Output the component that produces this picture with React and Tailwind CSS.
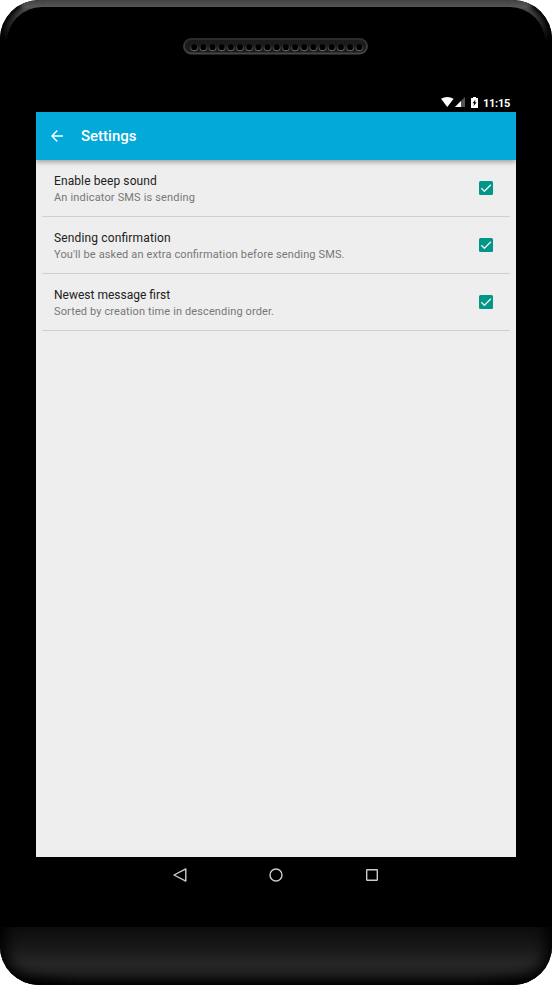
const settings = [
  { title: 'Enable beep sound', detail: 'An indicator SMS is sending', t: 'tracking-[0.1px]', d: 'tracking-[0.16px]' },
  { title: 'Sending confirmation', detail: "You'll be asked an extra confirmation before sending SMS.", t: 'tracking-[0.15px]', d: 'tracking-[0.13px]' },
  { title: 'Newest message first', detail: 'Sorted by creation time in descending order.', t: 'tracking-[0px]', d: 'tracking-[0.12px]' },
];

function Bezel() {
  return (
    <svg className="absolute inset-0" width="552" height="985" viewBox="0 0 552 985">
      <defs>
        <linearGradient id="rim" gradientUnits="userSpaceOnUse" x1="0" y1="0" x2="0" y2="42">
          <stop offset="0" stopColor="#424242" />
          <stop offset="0.16" stopColor="#555555" />
          <stop offset="0.45" stopColor="#303030" />
          <stop offset="1" stopColor="#000000" />
        </linearGradient>
        <linearGradient id="chin" x1="0" y1="0" x2="0" y2="1">
          <stop offset="0" stopColor="#0c0c0c" />
          <stop offset="0.35" stopColor="#181818" />
          <stop offset="0.63" stopColor="#262626" />
          <stop offset="0.78" stopColor="#202020" />
          <stop offset="1" stopColor="#030303" />
        </linearGradient>
        <filter id="soft" filterUnits="userSpaceOnUse" x="-60" y="860" width="672" height="200">
          <feGaussianBlur stdDeviation="7" />
        </filter>
        <filter id="edge" filterUnits="userSpaceOnUse" x="-20" y="-20" width="592" height="90">
          <feGaussianBlur stdDeviation="2.5" />
        </filter>
        <clipPath id="base"><rect x="0" y="927" width="552" height="58" /></clipPath>
        <clipPath id="case"><rect width="552" height="985" rx="39" /></clipPath>
      </defs>
      <g clipPath="url(#case)">
        <path fill="url(#rim)" d="M0 42V39A39 39 0 0 1 39 0H513A39 39 0 0 1 552 39V42H545A35 35 0 0 0 510 7H42A35 35 0 0 0 7 42Z" />
        <path d="M-1 52V39A40 40 0 0 1 20 4M553 52V39A40 40 0 0 0 532 4" fill="none" stroke="#000" strokeWidth="9" filter="url(#edge)" />
        <rect y="927" width="552" height="58" fill="url(#chin)" />
        <g clipPath="url(#base)">
          <path d="M-6 890V946A45 45 0 0 0 30 991L-30 1010L-40 890ZM558 890V946A45 45 0 0 1 522 991L582 1010L592 890Z" fill="#000" stroke="#000" strokeWidth="24" filter="url(#soft)" />
        </g>
      </g>
    </svg>
  );
}

function Speaker() {
  return (
    <svg className="relative mx-auto block" width="186" height="18" viewBox="0 0 186 18">
      <defs>
        <linearGradient id="pill" x1="0" y1="0" x2="0" y2="1">
          <stop offset="0" stopColor="#2b2b2b" />
          <stop offset="1" stopColor="#464646" />
        </linearGradient>
        <linearGradient id="hole" x1="0" y1="0" x2="0" y2="1">
          <stop offset="0.2" stopColor="#1c1c1c" />
          <stop offset="1" stopColor="#606060" />
        </linearGradient>
      </defs>
      <rect x="1" y="2" width="183" height="14.5" rx="7.25" fill="#1b1b1b" stroke="url(#pill)" strokeWidth="2" />
      {Array.from({ length: 19 }, (_, i) => (
        <circle key={i} cx={11.2 + i * 9.17} cy="10.2" r="3.5" fill="#000" stroke="url(#hole)" strokeWidth="1.2" />
      ))}
    </svg>
  );
}

function StatusBar() {
  return (
    <div className="flex h-4 items-center pr-1.5">
      <svg className="ml-auto" width="38" height="16" viewBox="0 0 38 16">
        <path fill="#fff" d="M0 2.8Q6.3-.9 12.6 2.8L6.3 11Z" />
        <path fill="#555" d="M24 1V11H14Z" />
        <path fill="#fff" d="M20 5V11H14Z" />
        <path fill="#fff" d="M30 2H32V1H35V2H37V12H30Z" />
        <path fill="#000" d="M34.5 3.5L31.5 7.2H33.1L32.5 10.3L35.6 6.3H34Z" />
      </svg>
      <span className="ml-1 w-[27px] whitespace-nowrap text-[11px] leading-4 font-bold tracking-[-0.25px] text-white">11:15</span>
    </div>
  );
}

export default function App() {
  return (
    <div className="h-[985px] w-[552px] overflow-hidden bg-white font-['Roboto',sans-serif]">
      <div className="relative h-full rounded-[39px] bg-black">
        <Bezel />
        <div className="relative flex h-full flex-col px-9">
          <div className="h-24 pt-[37px]"><Speaker /></div>
          <StatusBar />
          <main className="flex h-[745px] flex-col bg-[#eeeeee]">
            <header className="relative flex h-12 shrink-0 items-center bg-[#03a9d8] pl-[15px] shadow-[0_2px_5px_rgba(0,0,0,0.34)] [clip-path:inset(0_0_-8px_0)]">
              <svg width="12" height="12" viewBox="0 0 12 12" fill="none" stroke="#fff" strokeWidth="1.4">
                <path d="M12 6H1M6.3.6L.9 6L6.3 11.4" />
              </svg>
              <h1 className="ml-[18px] text-[15px] font-medium text-white">Settings</h1>
            </header>
            <ul className="px-1.5">
              {settings.map((s) => (
                <li key={s.title} className="flex h-[57px] items-center justify-between border-b border-[#cfcfcf] pr-[17px] pl-3 [font-feature-settings:'liga'_1]">
                  <div className="whitespace-nowrap pt-[3px]">
                    <h2 className={`text-[12px] leading-4 text-[#212121] ${s.t}`}>{s.title}</h2>
                    <p className={`text-[11px] leading-[17px] text-[#777777] ${s.d}`}>{s.detail}</p>
                  </div>
                  <svg width="14" height="14" viewBox="0 0 14 14">
                    <rect width="14" height="14" rx="1.5" fill="#009688" />
                    <path d="M2.3 7.2L5.4 10.3L11.9 3.8" fill="none" stroke="#eee" strokeWidth="1.4" />
                  </svg>
                </li>
              ))}
            </ul>
          </main>
          <nav className="flex h-9 items-center justify-center gap-[82px]">
            <svg width="14" height="14" viewBox="0 0 14 14" fill="none" stroke="#ccc" strokeWidth="1.4" strokeLinejoin="round"><path d="M12.8.9V13.1L1 7Z" /></svg>
            <svg width="14" height="14" viewBox="0 0 14 14" fill="none" stroke="#ccc" strokeWidth="1.4"><circle cx="7" cy="7" r="6" /></svg>
            <svg width="14" height="14" viewBox="0 0 14 14" fill="none" stroke="#ccc" strokeWidth="1.4"><rect x="1.7" y="1.7" width="10.6" height="10.6" rx=".5" /></svg>
          </nav>
        </div>
      </div>
    </div>
  );
}
